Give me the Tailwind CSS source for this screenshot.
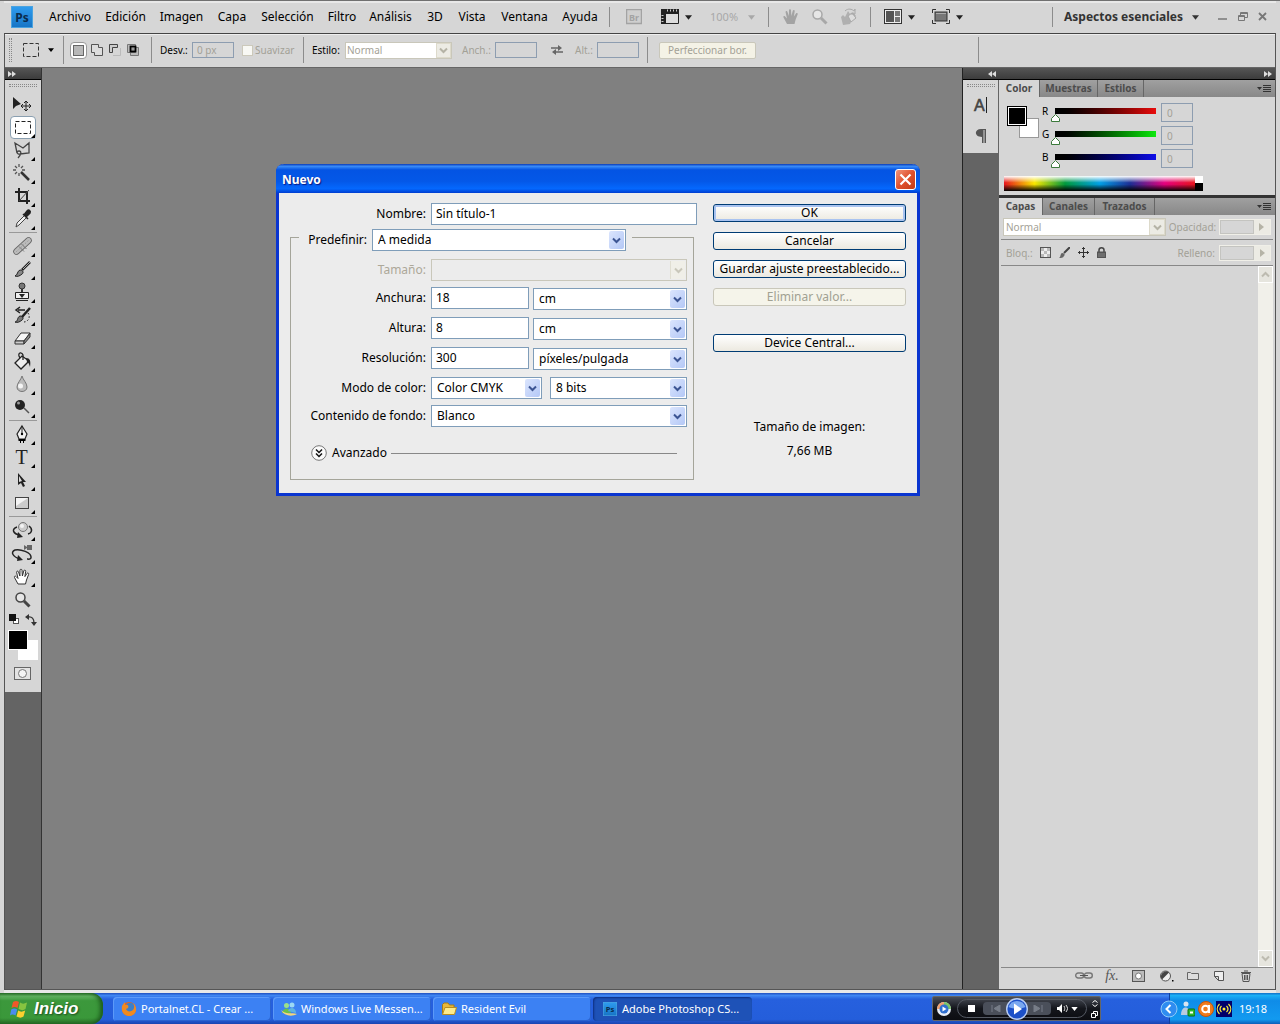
<!DOCTYPE html>
<html lang="es">
<head>
  <meta charset="UTF-8" />
  <title>Adobe Photoshop CS4</title>
  <script src="https://cdn.jsdelivr.net/npm/@tailwindcss/browser@4"></script>
</head>
<body class="h-screen overflow-hidden flex flex-col bg-[#d6d6d6] text-black text-[12px] leading-4 font-['Noto_Sans','Open_Sans',sans-serif]">

  <!-- Shared icons -->
  <svg class="absolute size-0">
    <defs>
      <linearGradient id="psg" x1="0" y1="0" x2="0" y2="1"><stop offset="0" stop-color="#2f9df0" /><stop offset="1" stop-color="#1673c4" /></linearGradient>
    </defs>
    <symbol id="chevron" viewBox="0 0 9 7"><path d="M1 1.500 4.500 5 8 1.500" fill="none" stroke="currentColor" stroke-width="2" /></symbol>
    <symbol id="caret" viewBox="0 0 8 5"><path d="M0 0h8L4 5z" fill="currentColor" /></symbol>
    <symbol id="corner" viewBox="0 0 4 4"><path d="M4 0v4H0z" /></symbol>
    <symbol id="panel-menu" viewBox="0 0 14 8"><path d="M0 2h5L2.500 5z" fill="#333" /><path d="M6 .5h8M6 2.500h8M6 4.500h8M6 6.500h8" stroke="#333" /></symbol>
    <symbol id="collapse" viewBox="0 0 8 6"><path d="M0 0l4 3-4 3zM4 0l4 3-4 3z" fill="#ddd" /></symbol>
    <symbol id="ps" viewBox="0 0 22 22">
      <rect width="22" height="22" fill="url(#psg)" /><rect x=".5" y=".5" width="21" height="21" fill="none" stroke="#4aa3e0" />
      <text x="11" y="15.500" text-anchor="middle" font-family="Noto Sans" font-weight="700" font-size="12" fill="#0a2c4d">Ps</text>
    </symbol>
    <symbol id="hand" viewBox="0 0 18 18"><path d="M5 16 1.500 9.500c-.6-1.300.9-1.900 1.600-.9L5 10.500 3.600 4.300c-.2-1.300 1.500-1.700 1.900-.4L6.900 8 7 2.200c0-1.300 1.900-1.300 2 0L9.400 8l1.400-5.200c.4-1.200 2.100-.8 1.900.5L11.900 8.600l2.100-3.200c.8-1 2.200-.1 1.600 1.100L13.500 12l-1 4z" /></symbol>
    <symbol id="lens" viewBox="0 0 18 18"><circle cx="6.500" cy="6.500" r="4.500" fill="#e6e6e6" stroke="currentColor" stroke-width="1.500" /><path d="M10 10l5.500 5.500" stroke="currentColor" stroke-width="3" /></symbol>
  </svg>

  <main class="relative flex-1 min-h-0 flex flex-col border-t border-[#707070] px-1">

    <!-- Menu bar -->
    <header class="h-8 shrink-0 flex items-center border-t-2 border-[#e8e8e8] pl-[7px] pr-2 pb-[2px] text-[12px]">
      <svg class="size-[22px] shrink-0"><use href="#ps" /></svg>
      <nav class="flex ml-[9px]">
        <button class="w-14">Archivo</button>
        <button class="w-[55px]">Edición</button>
        <button class="w-[57px]">Imagen</button>
        <button class="w-[44px]">Capa</button>
        <button class="w-[67px]">Selección</button>
        <button class="w-[42px]">Filtro</button>
        <button class="w-[55px]">Análisis</button>
        <button class="w-[34px]">3D</button>
        <button class="w-[40px]">Vista</button>
        <button class="w-[65px]">Ventana</button>
        <button class="w-[46px]">Ayuda</button>
      </nav>
      <span class="w-px h-5 bg-[#8c8c8c] ml-[6px]"></span>
      <button aria-label="Bridge" class="ml-4"><svg class="size-4" viewBox="0 0 16 16"><rect x=".5" y=".5" width="15" height="14" fill="#cfcfcf" stroke="#a3a3a3" stroke-width="1.500" /><text x="8" y="11.500" text-anchor="middle" font-family="Noto Sans" font-weight="700" font-size="9" fill="#a3a3a3">Br</text></svg></button>
      <button aria-label="Extras" class="flex items-center ml-[19px] gap-[6px] text-[#222]">
        <svg class="w-[18px] h-4" viewBox="0 0 18 16"><path d="M.5 14.500V.5h17v14z" fill="#ddd" stroke="#222" /><path d="M0 2.500h18" stroke="#222" stroke-width="5" /><path d="M2.500 0v15" stroke="#222" stroke-width="5" /><path d="M6 1.500h11" stroke="#ccc" stroke-width="2" stroke-dasharray="1 2" /><path d="M1.500 6v8" stroke="#ccc" stroke-width="2" stroke-dasharray="1 2" /></svg>
        <svg class="w-[7px] h-[5px]"><use href="#caret" /></svg>
      </button>
      <button class="flex items-center gap-[10px] ml-[18px] text-[11px] text-[#a8a8a8]">100% <svg class="w-[7px] h-[5px]"><use href="#caret" /></svg></button>
      <span class="w-px h-5 bg-[#8c8c8c] ml-[13px]"></span>
      <button aria-label="Mano" class="ml-[13px]"><svg class="size-[18px] fill-[#a3a3a3]"><use href="#hand" /></svg></button>
      <button aria-label="Zoom" class="ml-[11px]"><svg class="size-[18px] text-[#a8a8a8]"><use href="#lens" /></svg></button>
      <button aria-label="Rotar vista" class="ml-[11px]"><svg class="size-[18px]" viewBox="0 0 18 18"><path d="M3 17 1 9l2-2 2 2 3-6 2 3 3-2 3 4-4 4-2 4z" fill="#b0b0b0" /><path d="M8 8l4-3 4 5-5 4z" fill="#ddd" stroke="#a8a8a8" /><path d="M5 3c3-3 7-2 9 0l1-2v5h-4" fill="none" stroke="#a8a8a8" /></svg></button>
      <span class="w-px h-5 bg-[#8c8c8c] ml-3"></span>
      <button aria-label="Organizar documentos" class="flex items-center gap-[6px] ml-[13px] text-[#222]">
        <svg class="w-[18px] h-4" viewBox="0 0 18 16"><rect x=".5" y=".5" width="17" height="14" fill="#eee" stroke="#333" /><path d="M2 2h8v11H2z" fill="#555" /><path d="M11 2h5v5h-5zM11 8h5v5h-5z" fill="#777" /></svg>
        <svg class="w-[7px] h-[5px]"><use href="#caret" /></svg>
      </button>
      <button aria-label="Modo de pantalla" class="flex items-center gap-[6px] ml-[17px] text-[#222]">
        <svg class="w-[18px] h-4" viewBox="0 0 18 16"><path d="M.5 4V.5H4M14 .5h3.500V4M17.500 11v3.500H14M4 14.500H.5V11" fill="none" stroke="#333" /><rect x="3" y="3" width="12" height="9" fill="#777" stroke="#333" /><path d="M4 4.500h10" stroke="#aaa" /></svg>
        <svg class="w-[7px] h-[5px]"><use href="#caret" /></svg>
      </button>
      <div class="ml-auto flex items-center">
        <span class="w-px h-5 bg-[#8c8c8c]"></span>
        <button class="flex items-center gap-[9px] ml-[11px] font-bold text-[#333]">Aspectos esenciales <svg class="w-[7px] h-[5px]"><use href="#caret" /></svg></button>
        <button aria-label="Minimizar" class="ml-[19px]"><svg class="size-[10px]" viewBox="0 0 10 10"><path d="M0 7h9" stroke="#777" stroke-width="1.500" /></svg></button>
        <button aria-label="Restaurar" class="ml-[10px]"><svg class="size-[10px]" viewBox="0 0 10 10"><path d="M2.500 3V.5h7v5H7M.5 3.500h6v5h-6zM.5 4.500h6M2.500 1.500h7" fill="none" stroke="#777" /></svg></button>
        <button aria-label="Cerrar" class="ml-[10px]"><svg class="size-[10px]" viewBox="0 0 10 10"><path d="M1 1l7 7M8 1L1 8" stroke="#777" stroke-width="1.800" /></svg></button>
      </div>
    </header>

    <div class="flex-1 min-h-0 flex flex-col border border-t-[#444] border-[#555] bg-[#808080]">

      <!-- Options bar -->
      <section class="h-[34px] shrink-0 flex items-center bg-[#d6d6d6] border-b border-[#666] border-t border-t-[#eee] px-1 pb-[2px] text-[10px] text-[#a3a196]">
        <span class="w-[3px] h-6 border-x border-dotted border-[#888]"></span>
        <button aria-label="Marco rectangular" class="flex items-center gap-[9px] ml-[11px] text-black">
          <svg class="w-4 h-[15px]" viewBox="0 0 16 15"><rect x=".5" y=".5" width="15" height="13" fill="none" stroke="#333" stroke-dasharray="4 2" /></svg>
          <svg class="w-[6px] h-[4px]"><use href="#caret" /></svg>
        </button>
        <span class="w-px h-7 bg-[#8c8c8c] ml-[9px]"></span>
        <div class="flex items-center ml-[6px] gap-px">
          <button aria-label="Nueva" class="size-[17px] grid place-items-center bg-white rounded-sm border border-[#999]"><svg class="size-[11px]" viewBox="0 0 11 11"><rect x=".5" y=".5" width="10" height="10" fill="#b8b8b8" stroke="#666" /></svg></button>
          <button aria-label="Añadir" class="size-[17px] grid place-items-center"><svg class="size-[14px]" viewBox="0 0 14 14"><path d="M1.500 1.500h7v3h4v8h-8v-3h-3z" fill="#ddd" stroke="#555" /></svg></button>
          <button aria-label="Restar" class="size-[17px] grid place-items-center"><svg class="size-[14px]" viewBox="0 0 14 14"><path d="M1.500 9.500v-8h8v3h-5v5z" fill="#ccc" stroke="#444" /><path d="M5 12.500h7.500V5" fill="none" stroke="#bbb" /></svg></button>
          <button aria-label="Intersecar" class="size-[17px] grid place-items-center"><svg class="size-[14px]" viewBox="0 0 14 14"><path d="M1.500 1.500h8v8h-8zM4.500 4.500h8v8h-8z" fill="#bbb" stroke="#777" /><rect x="4.500" y="3.500" width="5" height="5" fill="#999" stroke="#000" stroke-width="1.800" /></svg></button>
        </div>
        <span class="w-px h-[26px] bg-[#8c8c8c] ml-[10px]"></span>
        <label for="desv" class="w-10 pl-2 text-black whitespace-nowrap">Desv.:</label>
        <input id="desv" value="0 px" disabled class="w-[42px] h-4 px-1 border border-[#8d9db0]" />
        <label class="flex items-center gap-[2px] ml-2 w-[61px]"><input type="checkbox" disabled class="appearance-none size-[11px] bg-[#f8f8f4] border border-[#ccc9bb]" />Suavizar</label>
        <span class="w-px h-[26px] bg-[#8c8c8c]"></span>
        <label for="estilo" class="w-10 pl-2 text-black">Estilo:</label>
        <span class="relative w-[107px] h-[17px] ml-px">
          <select id="estilo" disabled class="appearance-none block size-full bg-white border border-[#c9c7ba] pl-px leading-3 opacity-100"><option>Normal</option></select>
          <span class="absolute right-px top-px w-[15px] h-[15px] grid place-items-center bg-[#ecebe4] border border-[#dddacb] pointer-events-none text-[#b5b3a6]"><svg class="w-[9px] h-[7px]"><use href="#chevron" /></svg></span>
        </span>
        <label for="anch" class="w-[43px] pl-[10px] whitespace-nowrap">Anch.:</label>
        <input id="anch" disabled class="w-[42px] h-4 border border-[#8d9db0]" />
        <svg class="w-3 h-[10px] ml-[14px]" viewBox="0 0 12 10"><path d="M0 3h8M4 7h8" stroke="#666" stroke-width="1.500" /><path d="M7 0l4 3-4 3zM5 4L1 7l4 3z" fill="#666" /></svg>
        <label for="alt" class="w-[34px] pl-3 whitespace-nowrap">Alt.:</label>
        <input id="alt" disabled class="w-[42px] h-4 border border-[#8d9db0]" />
        <span class="w-px h-[26px] bg-[#8c8c8c] ml-2"></span>
        <button disabled class="w-[97px] h-[17px] ml-[11px] rounded-xs bg-[#f4f2e6] border border-[#c9c7ba] leading-3 whitespace-nowrap">Perfeccionar bor.</button>
        <span class="w-px h-[26px] bg-[#8c8c8c] ml-[222px]"></span>
      </section>

      <div class="flex-1 min-h-0 flex">

        <!-- Tools -->
        <aside class="w-[37px] shrink-0 flex flex-col bg-[#646464] border-r border-[#333]">
          <div class="h-3 shrink-0 bg-linear-to-b from-[#555] to-[#3c3c3c] border-b border-black flex items-center pl-[3px]"><svg class="w-2 h-[6px]"><use href="#collapse" /></svg></div>
          <div class="bg-[#d6d6d6] h-[612px] flex flex-col items-center pr-px">
            <span class="w-7 h-[3px] mt-1 mb-[6px] border-y border-dotted border-[#888]"></span>
            <button aria-label="Mover" class="h-[23px]"><svg class="w-6 h-[23px]" viewBox="0 0 24 23"><path d="M2 4v12l3-3 5-2z" fill="#222" /><path d="M15 8v10M10 13h10M13 10l2-2 2 2M13 16l2 2 2-2M12 11l-2 2 2 2M18 11l2 2-2 2" fill="none" stroke="#222" /></svg></button>
            <button aria-label="Marco" class="h-[23px] w-[26px] rounded border border-[#8a9fb0] bg-white relative"><svg class="w-6 h-[21px]" viewBox="0 0 24 21"><rect x="4.500" y="4.500" width="15" height="12" fill="none" stroke="#222" stroke-dasharray="4 2" /></svg><svg class="absolute right-0 bottom-0 size-1"><use href="#corner" /></svg></button>
            <button aria-label="Lazo" class="h-[23px] relative"><svg class="w-6 h-[23px]" viewBox="0 0 24 23"><path d="M6 14 4 4l8 5 6-5v10l-9 1c-3 1-4-3-1-3s2 4-1 7" fill="none" stroke="#444" stroke-width="1.300" /></svg><svg class="absolute right-0 bottom-px size-1"><use href="#corner" /></svg></button>
            <button aria-label="Varita" class="h-[23px] relative"><svg class="w-6 h-[23px]" viewBox="0 0 24 23"><path d="M10 10l8 8" stroke="#333" stroke-width="2.500" /><path d="M8 2v3M8 11v3M2 8h3M11 8h3M4 4l2 2M12 4l-2 2M4 12l2-2" stroke="#555" stroke-width="1.300" /></svg><svg class="absolute right-0 bottom-px size-1"><use href="#corner" /></svg></button>
            <button aria-label="Recortar" class="h-[23px] relative"><svg class="w-6 h-[23px]" viewBox="0 0 24 23"><path d="M8 3v13h11M4 7h12v12" fill="none" stroke="#222" stroke-width="2" /><path d="M8 16 18 5" stroke="#444" /></svg><svg class="absolute right-0 bottom-px size-1"><use href="#corner" /></svg></button>
            <button aria-label="Cuentagotas" class="h-[23px] relative"><svg class="w-6 h-[23px]" viewBox="0 0 24 23"><path d="M5 19l1-4 8-8 2 2-8 8z" fill="#eee" stroke="#444" /><path d="M12 6l5 5M13 7l3-4c2-2 4 0 3 2l-4 4z" fill="#222" stroke="#222" stroke-width="1.500" /></svg><svg class="absolute right-0 bottom-px size-1"><use href="#corner" /></svg></button>
            <span class="w-7 h-px my-[1px] mb-[2px] bg-[#999]"></span>
            <button aria-label="Pincel corrector" class="h-[23px] relative"><svg class="w-6 h-[23px]" viewBox="0 0 24 23"><path d="M5.500 16.500l12-11" stroke="#666" stroke-width="6.500" stroke-linecap="round" /><path d="M5.500 16.500l12-11" stroke="#bbb" stroke-width="5" stroke-linecap="round" /><path d="M8 11.500l5 5M10.500 9l5 5" stroke="#777" /><path d="M5.500 16.500l12-11" stroke="#888" stroke-dasharray="1 2" /></svg><svg class="absolute right-0 bottom-px size-1"><use href="#corner" /></svg></button>
            <button aria-label="Pincel" class="h-[23px] relative"><svg class="w-6 h-[23px]" viewBox="0 0 24 23"><path d="M19 4l-8 8" stroke="#222" stroke-width="2.500" /><path d="M19 4l-7 7" stroke="#aaa" /><path d="M4 18c3-1 2-5 5-6 3 0 4 3 2 4-2 2-5 3-7 2z" fill="#888" stroke="#222" /></svg><svg class="absolute right-0 bottom-px size-1"><use href="#corner" /></svg></button>
            <button aria-label="Tampón" class="h-[23px] relative"><svg class="w-6 h-[23px]" viewBox="0 0 24 23"><circle cx="11" cy="5" r="3" fill="#777" stroke="#333" /><path d="M10 8h2v4h-2z" fill="#333" /><path d="M4.500 11.500h13v6h-13zM5 19.500h12" fill="#eee" stroke="#222" /><path d="M8 13h6l-3 4z" fill="#222" /></svg><svg class="absolute right-0 bottom-px size-1"><use href="#corner" /></svg></button>
            <button aria-label="Pincel de historia" class="h-[23px] relative"><svg class="w-6 h-[23px]" viewBox="0 0 24 23"><path d="M19 4l-8 9" stroke="#222" stroke-width="2.500" /><path d="M4 18c3 0 2-5 5-6 3 0 4 3 2 4-2 2-5 3-7 2z" fill="#777" stroke="#222" /><path d="M7 6h7M9 3L5 6l4 3" fill="none" stroke="#222" stroke-width="1.500" /><path d="M17 9c3 4 0 9-4 9" fill="none" stroke="#222" stroke-dasharray="1.500 2" /></svg><svg class="absolute right-0 bottom-px size-1"><use href="#corner" /></svg></button>
            <button aria-label="Borrador" class="h-[23px] relative"><svg class="w-6 h-[23px]" viewBox="0 0 24 23"><path d="M4 14l6-8h9l-6 8z" fill="#f6f6f6" stroke="#333" /><path d="M4 14v3h9v-3z" fill="#ccc" stroke="#333" /><path d="M13 14v3l6-7V6z" fill="#888" stroke="#333" /></svg><svg class="absolute right-0 bottom-px size-1"><use href="#corner" /></svg></button>
            <button aria-label="Bote de pintura" class="h-[23px] relative"><svg class="w-6 h-[23px]" viewBox="0 0 24 23"><path d="M4 13l7-7 7 5-8 8z" fill="#eee" stroke="#222" stroke-width="1.300" /><path d="M15 8c4 0 5 3 4 9-1-3-1-4-3-5z" fill="#222" /><path d="M12 10V5c-1-3-5-3-4 1l1 2" fill="none" stroke="#222" stroke-width="1.300" /></svg><svg class="absolute right-0 bottom-px size-1"><use href="#corner" /></svg></button>
            <button aria-label="Desenfocar" class="h-[23px] relative"><svg class="w-6 h-[23px]" viewBox="0 0 24 23"><path d="M11 3c1 4 5 7 5 11 0 6-10 6-10 0 0-4 4-7 5-11z" fill="#bbb" stroke="#777" /><circle cx="9.500" cy="13" r="2.500" fill="#f4f4f4" /></svg><svg class="absolute right-0 bottom-px size-1"><use href="#corner" /></svg></button>
            <button aria-label="Subexponer" class="h-[23px] relative"><svg class="w-6 h-[23px]" viewBox="0 0 24 23"><circle cx="9" cy="9" r="5" fill="#222" /><circle cx="7.500" cy="7" r="1.500" fill="#999" /><path d="M13 12l5 5" stroke="#555" stroke-width="1.500" /></svg><svg class="absolute right-0 bottom-px size-1"><use href="#corner" /></svg></button>
            <span class="w-7 h-px my-[1px] mb-[2px] bg-[#999]"></span>
            <button aria-label="Pluma" class="h-[23px] relative"><svg class="w-6 h-[23px]" viewBox="0 0 24 23"><path d="M11 3l5 8-2 5H8l-2-5z" fill="#f2f2f2" stroke="#222" stroke-width="1.200" /><path d="M11 3v8" stroke="#222" /><circle cx="11" cy="11" r="1.200" /><path d="M7.500 16h7v2h-7zM9 18h1v2H9zM12 18h1v2h-1z" /></svg><svg class="absolute right-0 bottom-px size-1"><use href="#corner" /></svg></button>
            <button aria-label="Texto" class="h-[23px] w-6 relative pr-[2px] text-[20px] leading-[23px] text-[#222] font-['Liberation_Serif',serif]">T<svg class="absolute right-0 bottom-px size-1"><use href="#corner" /></svg></button>
            <button aria-label="Selección de trazado" class="h-[23px] relative"><svg class="w-6 h-[23px]" viewBox="0 0 24 23"><path d="M7 4v12l3-2 2 4 2-1-2-4h3z" fill="#222" /><path d="M8 7v6l3-1z" fill="#ddd" /></svg><svg class="absolute right-0 bottom-px size-1"><use href="#corner" /></svg></button>
            <button aria-label="Rectángulo" class="h-[23px] relative"><svg class="w-6 h-[23px]" viewBox="0 0 24 23"><rect x="4.500" y="5.500" width="13" height="11" fill="#ccc" stroke="#444" /><path d="M5 6h12L5 14z" fill="#f4f4f4" /></svg><svg class="absolute right-0 bottom-px size-1"><use href="#corner" /></svg></button>
            <span class="w-7 h-px my-[1px] mb-[2px] bg-[#999]"></span>
            <button aria-label="Rotación 3D" class="h-[23px] relative"><svg class="w-6 h-[23px]" viewBox="0 0 24 23"><path d="M6 8c-6 2-4 7 3 8M18 7c4 3 3 7-1 8" fill="none" stroke="#222" stroke-width="1.500" /><path d="M7 13l5 5-6 1z" fill="#222" /><circle cx="12" cy="8" r="4.500" fill="#ccc" stroke="#777" /><circle cx="11" cy="7" r="2" fill="#f4f4f4" /></svg><svg class="absolute right-0 bottom-px size-1"><use href="#corner" /></svg></button>
            <button aria-label="Órbita 3D" class="h-[23px] relative"><svg class="w-6 h-[23px]" viewBox="0 0 24 23"><path d="M9 17C2 15-1 10 4 8c5-1 17 2 16 8-1 2-3 1-4 1" fill="none" stroke="#222" stroke-width="1.500" /><path d="M7 13l5 5-6 1z" fill="#222" /><path d="M13 3l3 2V3h5v5h-5V6l-3 2z" fill="#666" /></svg><svg class="absolute right-0 bottom-px size-1"><use href="#corner" /></svg></button>
            <button aria-label="Mano" class="h-[23px] w-6 relative"><svg class="size-[18px] ml-[2px] fill-white stroke-[#333]"><use href="#hand" /></svg><svg class="absolute right-0 bottom-px size-1"><use href="#corner" /></svg></button>
            <button aria-label="Zoom" class="h-[23px] w-6"><svg class="size-[18px] ml-[3px] text-[#444]"><use href="#lens" /></svg></button>
            <div class="flex w-full justify-between pl-1 pr-[3px] pt-[3px]">
              <svg class="size-3" viewBox="0 0 12 12"><rect x="4.500" y="4.500" width="5" height="5" fill="#fff" stroke="#555" /><rect width="7" height="7" fill="#111" /></svg>
              <svg class="size-3" viewBox="0 0 12 12"><path d="M3 3c4-1 6 2 6 6" fill="none" stroke="#333" stroke-width="1.300" /><path d="M0 3l4-3v6zM6 8h6l-3 4z" fill="#333" /></svg>
            </div>
            <div class="relative size-[30px] mt-1 shrink-0">
              <button aria-label="Color de fondo" class="absolute right-0 bottom-0 size-5 bg-white"></button>
              <button aria-label="Color frontal" class="absolute left-0 top-0 size-5 bg-black border border-white"></button>
            </div>
            <button aria-label="Máscara rápida" class="mt-[7px]"><svg class="w-[17px] h-[13px]" viewBox="0 0 17 13"><rect x=".5" y=".5" width="16" height="12" fill="#e4e4e4" stroke="#666" /><circle cx="8.500" cy="6.500" r="4" fill="#f4f4f4" stroke="#777" /></svg></button>
          </div>
        </aside>

        <!-- Canvas -->
        <div class="flex-1"></div>

        <!-- Panels -->
        <aside class="w-[313px] shrink-0 flex flex-col bg-[#646464] border-l border-[#222]">
          <div class="h-3 shrink-0 bg-linear-to-b from-[#555] to-[#3c3c3c] border-b border-black flex items-center pr-[3px]">
            <svg class="w-2 h-[6px] ml-[25px] rotate-180"><use href="#collapse" /></svg>
            <svg class="w-2 h-[6px] ml-auto"><use href="#collapse" /></svg>
          </div>
          <div class="flex-1 min-h-0 flex gap-px">
            <div class="w-[35px] h-[73px] flex flex-col items-center bg-[#d6d6d6]">
              <span class="w-7 h-[3px] mt-1 border-y border-dotted border-[#888]"></span>
              <button aria-label="Carácter" class="mt-[10px]"><svg class="size-4" viewBox="0 0 16 16"><text x="1" y="14" font-family="Liberation Sans" font-size="16" fill="#444" stroke="#444" stroke-width=".6">A</text><path d="M13.500 0v16" stroke="#222" /></svg></button>
              <button aria-label="Párrafo" class="mt-4"><svg class="w-3 h-[14px]" viewBox="0 0 12 14"><path d="M11 0v14H9.500V1H8.500v13H7V8C-1 8-1 0 6 0z" fill="#555" /></svg></button>
            </div>

            <div class="flex-1 min-w-0 flex flex-col gap-[3px] bg-[#333] text-[10px] text-[#a3a196]">

              <!-- Color -->
              <section class="bg-[#d6d6d6] h-[115px] shrink-0">
                <div class="h-[17px] flex bg-linear-to-b from-[#a0a0a0] to-[#888] font-bold text-[#4c4c4c]">
                  <button class="w-10 pb-px bg-[#d6d6d6]">Color</button>
                  <button class="w-[59px] pb-px border-x border-[#666]">Muestras</button>
                  <button class="w-[46px] pb-px border-r border-[#666]">Estilos</button>
                  <button aria-label="Menú del panel" class="ml-auto pr-1"><svg class="w-[14px] h-2"><use href="#panel-menu" /></svg></button>
                </div>
                <div class="flex pl-2 pt-[6px]">
                  <div class="relative size-8 mt-[3px]">
                    <button aria-label="Fondo" class="absolute right-0 bottom-0 size-5 bg-white border border-[#999]"></button>
                    <button aria-label="Frente" class="absolute left-0 top-0 size-5 bg-black border border-black outline-1 -outline-offset-2 outline-white"></button>
                  </div>
                  <div class="flex flex-col gap-1 pl-[3px]">
                    <div class="flex h-[19px]">
                      <label for="r" class="w-[13px] text-black">R</label>
                      <span class="relative w-[101px] h-[19px]">
                        <input id="r" type="range" value="0" max="255" class="appearance-none block w-full h-[6px] mt-[5px] bg-linear-to-r from-black to-[#e80c0c] [&::-webkit-slider-thumb]:appearance-none" />
                        <svg class="absolute -left-1 top-[11px] w-[9px] h-2" viewBox="0 0 9 8"><path d="M4.500.5l4 4v3h-8v-3z" fill="#fff" stroke="#3c7a3c" /></svg>
                      </span>
                      <input aria-label="Valor R" value="0" disabled class="w-8 h-[19px] ml-[5px] pl-[5px] border border-[#8d9db0]" />
                    </div>
                    <div class="flex h-[19px]">
                      <label for="g" class="w-[13px] text-black">G</label>
                      <span class="relative w-[101px] h-[19px]">
                        <input id="g" type="range" value="0" max="255" class="appearance-none block w-full h-[6px] mt-[5px] bg-linear-to-r from-black to-[#0ce80c] [&::-webkit-slider-thumb]:appearance-none" />
                        <svg class="absolute -left-1 top-[11px] w-[9px] h-2" viewBox="0 0 9 8"><path d="M4.500.5l4 4v3h-8v-3z" fill="#fff" stroke="#3c7a3c" /></svg>
                      </span>
                      <input aria-label="Valor G" value="0" disabled class="w-8 h-[19px] ml-[5px] pl-[5px] border border-[#8d9db0]" />
                    </div>
                    <div class="flex h-[19px]">
                      <label for="b" class="w-[13px] text-black">B</label>
                      <span class="relative w-[101px] h-[19px]">
                        <input id="b" type="range" value="0" max="255" class="appearance-none block w-full h-[6px] mt-[5px] bg-linear-to-r from-black to-[#0c0ce8] [&::-webkit-slider-thumb]:appearance-none" />
                        <svg class="absolute -left-1 top-[11px] w-[9px] h-2" viewBox="0 0 9 8"><path d="M4.500.5l4 4v3h-8v-3z" fill="#fff" stroke="#3c7a3c" /></svg>
                      </span>
                      <input aria-label="Valor B" value="0" disabled class="w-8 h-[19px] ml-[5px] pl-[5px] border border-[#8d9db0]" />
                    </div>
                  </div>
                </div>
                <div class="flex w-[199px] h-[15px] ml-[5px] mt-[8px]">
                  <div class="flex-1 bg-[linear-gradient(to_bottom,#fff,#fff0_45%,#0000_55%,#000),linear-gradient(to_right,#e8131c,#f9e800_16%,#009a3c_32%,#00a0e6_50%,#1d2f96_66%,#e5007e_84%,#e8131c)]"></div>
                  <div class="w-2 bg-linear-to-b from-white from-50% to-black to-50%"></div>
                </div>
              </section>

              <!-- Layers -->
              <section class="flex-1 min-h-0 flex flex-col bg-[#d6d6d6]">
                <div class="h-[17px] shrink-0 flex bg-linear-to-b from-[#a0a0a0] to-[#888] font-bold text-[#4c4c4c]">
                  <button class="w-[43px] pb-px bg-[#d6d6d6]">Capas</button>
                  <button class="w-[53px] pb-px border-x border-[#666]">Canales</button>
                  <button class="w-[60px] pb-px border-r border-[#666]">Trazados</button>
                  <button aria-label="Menú del panel" class="ml-auto pr-1"><svg class="w-[14px] h-2"><use href="#panel-menu" /></svg></button>
                </div>
                <div class="h-[25px] shrink-0 mx-[2px] flex items-center justify-between pl-[2px] pr-[2px] border-b border-[#888]">
                  <span class="relative w-[163px] h-[18px]">
                    <select aria-label="Modo de fusión" disabled class="appearance-none block size-full bg-white border border-[#c9c7ba] pl-[2px] leading-3 opacity-100"><option>Normal</option></select>
                    <span class="absolute right-px top-px w-4 h-4 grid place-items-center bg-[#ecebe4] border border-[#dddacb] pointer-events-none text-[#b5b3a6]"><svg class="w-[9px] h-[7px]"><use href="#chevron" /></svg></span>
                  </span>
                  <label for="opacidad">Opacidad:</label>
                  <span class="flex w-[52px] h-4 border border-[#f0efe8]">
                    <input id="opacidad" disabled class="w-[34px] border border-[#c4c4c0]" />
                    <button aria-label="Ajustar opacidad" disabled class="flex-1 grid place-items-center bg-[#ecebe4] text-[#b5b3a6]"><svg class="w-[5px] h-2" viewBox="0 0 5 8"><path d="M0 0l5 4-5 4z" fill="currentColor" /></svg></button>
                  </span>
                </div>
                <div class="h-[26px] shrink-0 mx-[2px] flex items-center gap-2 pl-[5px] pr-[2px] border-b border-[#888]">
                  <span class="w-[26px] whitespace-nowrap">Bloq.:</span>
                  <button aria-label="Bloquear transparencia"><svg class="size-[11px]" viewBox="0 0 11 11"><rect x=".5" y=".5" width="10" height="10" fill="#eee" stroke="#555" /><path d="M1 1h3v3H1zM7 1h3v3H7zM4 4h3v3H4zM1 7h3v3H1zM7 7h3v3H7z" fill="#bbb" /></svg></button>
                  <button aria-label="Bloquear píxeles"><svg class="size-[11px]" viewBox="0 0 11 11"><path d="M11 0L5 6" stroke="#444" stroke-width="2" /><path d="M0 11c2-1 1-4 3-5 3 0 3 2 2 3-1 2-3 2-5 2z" fill="#666" /></svg></button>
                  <button aria-label="Bloquear posición"><svg class="size-[11px]" viewBox="0 0 11 11"><path d="M5.500 0v11M0 5.500h11M4 2l1.500-1.500L7 2M4 9l1.500 1.500L7 9M2 4L.5 5.500 2 7M9 4l1.500 1.500L9 7" fill="none" stroke="#333" /></svg></button>
                  <button aria-label="Bloquear todo"><svg class="w-[9px] h-[11px]" viewBox="0 0 9 11"><path d="M2 5V3c0-3 5-3 5 0v2" fill="none" stroke="#444" stroke-width="1.500" /><rect y="4.500" width="9" height="6.500" fill="#555" /><path d="M1 7h7M1 9h7" stroke="#888" /></svg></button>
                  <label for="relleno" class="ml-auto -mr-1">Relleno:</label>
                  <span class="flex w-[52px] h-4 border border-[#f0efe8]">
                    <input id="relleno" disabled class="w-[34px] border border-[#c4c4c0]" />
                    <button aria-label="Ajustar relleno" disabled class="flex-1 grid place-items-center bg-[#ecebe4] text-[#b5b3a6]"><svg class="w-[5px] h-2" viewBox="0 0 5 8"><path d="M0 0l5 4-5 4z" fill="currentColor" /></svg></button>
                  </span>
                </div>
                <div class="flex-1 flex justify-end pr-[2px]">
                  <div class="w-[15px] flex flex-col justify-between bg-[#f1f0ea] text-[#bdbbb0]">
                    <button aria-label="Subir" class="h-[17px] grid place-items-center bg-[#e6e5de] border border-white"><svg class="w-[9px] h-[7px] rotate-180"><use href="#chevron" /></svg></button>
                    <button aria-label="Bajar" class="h-[17px] grid place-items-center bg-[#e6e5de] border border-white"><svg class="w-[9px] h-[7px]"><use href="#chevron" /></svg></button>
                  </div>
                </div>
                <footer class="h-[22px] shrink-0 mx-[2px] border-t border-[#888] flex items-center justify-end gap-[15px] pr-[22px] pb-[6px] text-[#555]">
                  <button aria-label="Enlazar"><svg class="w-[18px] h-[7px]" viewBox="0 0 18 7"><rect x=".7" y="1" width="8" height="5" rx="2.500" fill="none" stroke="#777" stroke-width="1.400" /><rect x="9.300" y="1" width="8" height="5" rx="2.500" fill="none" stroke="#777" stroke-width="1.400" /><path d="M5 3.500h8" stroke="#555" /></svg></button>
                  <button aria-label="Estilo de capa" class="-ml-1 -mr-[3px] w-4 text-[14px] italic font-['Liberation_Serif',serif]">fx.</button>
                  <button aria-label="Máscara"><svg class="w-[13px] h-3" viewBox="0 0 13 12"><rect x=".5" y=".5" width="12" height="11" fill="#bbb" stroke="#555" /><circle cx="6.500" cy="6" r="3" fill="#fff" stroke="#777" /></svg></button>
                  <button aria-label="Ajuste"><svg class="w-[14px] h-3" viewBox="0 0 14 12"><circle cx="5.500" cy="6" r="5" fill="#eee" stroke="#555" /><path d="M2 9.500A5 5 0 0 1 9 2.500z" fill="#444" /><path d="M12 10h1.500v1.500H12z" /></svg></button>
                  <button aria-label="Grupo" class="-ml-[2px]"><svg class="w-3 h-[9px]" viewBox="0 0 12 9"><path d="M.5 8.500v-7h3l1 1h7v6z" fill="#ddd" stroke="#666" /></svg></button>
                  <button aria-label="Nueva capa"><svg class="w-[10px] h-[10px]" viewBox="0 0 10 10"><path d="M.5.5h9v9h-5v-4h-4z" fill="#eee" stroke="#555" /><path d="M.5 5.500l4 4" stroke="#555" /></svg></button>
                  <button aria-label="Eliminar" class="ml-[2px]"><svg class="w-[10px] h-3" viewBox="0 0 10 12"><path d="M1 3.500h8l-1 8H2zM0 2.500h10M3 1h4M3.500 5v5M5 5v5M6.500 5v5" fill="none" stroke="#555" /></svg></button>
                </footer>
              </section>
            </div>
          </div>
        </aside>
      </div>
    </div>
    <div class="h-[3px] shrink-0 bg-[#e8e8e8]"></div>

    <!-- New document dialog -->
    <form class="absolute left-[276px] top-[163px] w-[644px] rounded-t-lg border-3 border-t-0 border-[#0a35d0] bg-[#ececec]">
      <div class="h-[29px] -mx-[3px] pl-[6px] pr-1 flex items-center justify-between rounded-t-lg bg-[linear-gradient(to_bottom,#0a3bb5,#3a8cf8_8%,#0454e3_20%,#0458e8_60%,#0468fe_85%,#003dd0)]">
        <h1 class="pt-[2px] font-bold text-[12px] text-white [text-shadow:1px_1px_1px_#0a1883]">Nuevo</h1>
        <button type="button" aria-label="Cerrar" class="size-[21px] mt-[2px] grid place-items-center rounded-[3px] border border-white bg-linear-to-br from-[#f0937a] via-[#e0502c] to-[#c33c14]"><svg class="size-[13px]" viewBox="0 0 13 13"><path d="M1.500 1.500l10 10M11.500 1.500l-10 10" stroke="#fff" stroke-width="2.200" /></svg></button>
      </div>
      <div class="flex gap-4 pt-[10px] pl-[11px] pr-[11px] pb-[13px]">
        <div class="w-[407px]">
          <div class="flex items-center">
            <label for="nombre" class="w-[141px] pr-[5px] text-right">Nombre:</label>
            <input id="nombre" value="Sin título-1" class="flex-1 h-[22px] px-1 pb-[2px] bg-white border border-[#7f9db9]" />
          </div>
          <fieldset class="w-[404px] -mt-[2px] border border-[#a5a59a] pl-2 pb-[18px]">
            <legend class="flex items-center pt-[6px] pr-[6px]">
              <label for="predefinir" class="w-[73px] pr-[5px] text-right">Predefinir:</label>
              <span class="relative w-[254px] h-[22px]">
                <select id="predefinir" class="appearance-none block size-full bg-white border border-[#7f9db9] pl-[5px]"><option>A medida</option></select>
                <span class="absolute right-[2px] top-[2px] w-[15px] h-[18px] grid place-items-center rounded-xs bg-linear-to-br from-[#dbe5fd] to-[#b4c8f6] pointer-events-none text-[#3c5593]"><svg class="w-[9px] h-[7px]"><use href="#chevron" /></svg></span>
              </span>
            </legend>
            <div class="flex items-center mt-2 text-[#aca899]">
              <label for="tamano" class="w-[132px] pr-[5px] text-right">Tamaño:</label>
              <span class="relative w-[256px] h-[22px]">
                <select id="tamano" disabled class="appearance-none block size-full border border-[#c9c7ba]"><option></option></select>
                <span class="absolute right-[2px] top-[2px] w-[15px] h-[18px] grid place-items-center bg-[#f0efe8] border-l border-[#e0ded2] pointer-events-none text-[#c9c7ba]"><svg class="w-[9px] h-[7px]"><use href="#chevron" /></svg></span>
              </span>
            </div>
            <div class="flex items-center mt-[6px]">
              <label for="anchura" class="w-[132px] pr-[5px] text-right">Anchura:</label>
              <input id="anchura" value="18" class="w-[98px] h-[22px] px-1 pb-[2px] bg-white border border-[#7f9db9]" />
              <span class="relative w-[154px] h-[22px] ml-1 top-px">
                <select aria-label="Unidad de anchura" class="appearance-none block size-full bg-white border border-[#7f9db9] pl-[5px]"><option>cm</option></select>
                <span class="absolute right-[2px] top-[2px] w-[15px] h-[18px] grid place-items-center rounded-xs bg-linear-to-br from-[#dbe5fd] to-[#b4c8f6] pointer-events-none text-[#3c5593]"><svg class="w-[9px] h-[7px]"><use href="#chevron" /></svg></span>
              </span>
            </div>
            <div class="flex items-center mt-2">
              <label for="altura" class="w-[132px] pr-[5px] text-right">Altura:</label>
              <input id="altura" value="8" class="w-[98px] h-[22px] px-1 pb-[2px] bg-white border border-[#7f9db9]" />
              <span class="relative w-[154px] h-[22px] ml-1 top-px">
                <select aria-label="Unidad de altura" class="appearance-none block size-full bg-white border border-[#7f9db9] pl-[5px]"><option>cm</option></select>
                <span class="absolute right-[2px] top-[2px] w-[15px] h-[18px] grid place-items-center rounded-xs bg-linear-to-br from-[#dbe5fd] to-[#b4c8f6] pointer-events-none text-[#3c5593]"><svg class="w-[9px] h-[7px]"><use href="#chevron" /></svg></span>
              </span>
            </div>
            <div class="flex items-center mt-2">
              <label for="resolucion" class="w-[132px] pr-[5px] text-right">Resolución:</label>
              <input id="resolucion" value="300" class="w-[98px] h-[22px] px-1 pb-[2px] bg-white border border-[#7f9db9]" />
              <span class="relative w-[154px] h-[22px] ml-1 top-px">
                <select aria-label="Unidad de resolución" class="appearance-none block size-full bg-white border border-[#7f9db9] pl-[5px]"><option>píxeles/pulgada</option></select>
                <span class="absolute right-[2px] top-[2px] w-[15px] h-[18px] grid place-items-center rounded-xs bg-linear-to-br from-[#dbe5fd] to-[#b4c8f6] pointer-events-none text-[#3c5593]"><svg class="w-[9px] h-[7px]"><use href="#chevron" /></svg></span>
              </span>
            </div>
            <div class="flex items-center mt-2">
              <label for="modo" class="w-[132px] pr-[5px] text-right">Modo de color:</label>
              <span class="relative w-[111px] h-[22px]">
                <select id="modo" class="appearance-none block size-full bg-white border border-[#7f9db9] pl-[5px]"><option>Color CMYK</option></select>
                <span class="absolute right-[2px] top-[2px] w-[15px] h-[18px] grid place-items-center rounded-xs bg-linear-to-br from-[#dbe5fd] to-[#b4c8f6] pointer-events-none text-[#3c5593]"><svg class="w-[9px] h-[7px]"><use href="#chevron" /></svg></span>
              </span>
              <span class="relative w-[137px] h-[22px] ml-2">
                <select aria-label="Profundidad" class="appearance-none block size-full bg-white border border-[#7f9db9] pl-[5px]"><option>8 bits</option></select>
                <span class="absolute right-[2px] top-[2px] w-[15px] h-[18px] grid place-items-center rounded-xs bg-linear-to-br from-[#dbe5fd] to-[#b4c8f6] pointer-events-none text-[#3c5593]"><svg class="w-[9px] h-[7px]"><use href="#chevron" /></svg></span>
              </span>
            </div>
            <div class="flex items-center mt-[6px]">
              <label for="fondo" class="w-[132px] pr-[5px] text-right whitespace-nowrap">Contenido de fondo:</label>
              <span class="relative w-[256px] h-[22px]">
                <select id="fondo" class="appearance-none block size-full bg-white border border-[#7f9db9] pl-[5px]"><option>Blanco</option></select>
                <span class="absolute right-[2px] top-[2px] w-[15px] h-[18px] grid place-items-center rounded-xs bg-linear-to-br from-[#dbe5fd] to-[#b4c8f6] pointer-events-none text-[#3c5593]"><svg class="w-[9px] h-[7px]"><use href="#chevron" /></svg></span>
              </span>
            </div>
            <div class="flex items-center mt-[18px] pl-3 pr-4">
              <button type="button" class="flex items-center gap-[5px]">
                <svg class="size-4" viewBox="0 0 16 16"><circle cx="8" cy="8" r="7.300" fill="#fafafa" stroke="#777" /><path d="M5 4.500l3 3 3-3M5 8.500l3 3 3-3" fill="none" stroke="#111" stroke-width="1.500" /></svg>
                Avanzado
              </button>
              <span class="flex-1 h-px ml-1 bg-[#888]"></span>
            </div>
          </fieldset>
        </div>
        <div class="flex-1 flex flex-col pt-px">
          <button class="h-[18px] leading-4 rounded-[3px] border border-[#003c74] bg-linear-to-b from-white to-[#ece9e0] shadow-[inset_0_0_0_2px_#a9c3f0]">OK</button>
          <button type="button" class="h-[18px] leading-4 mt-[10px] rounded-[3px] border border-[#003c74] bg-linear-to-b from-white to-[#ece9e0]">Cancelar</button>
          <button type="button" class="h-[18px] leading-4 mt-[10px] rounded-[3px] border border-[#003c74] bg-linear-to-b from-white to-[#ece9e0] whitespace-nowrap">Guardar ajuste preestablecido...</button>
          <button type="button" disabled class="h-[18px] leading-4 mt-[10px] rounded-[3px] border border-[#c9c7ba] bg-[#f5f4ea] text-[#a1a192]">Eliminar valor...</button>
          <button type="button" class="h-[18px] leading-4 mt-7 rounded-[3px] border border-[#003c74] bg-linear-to-b from-white to-[#ece9e0]">Device Central...</button>
          <p class="mt-[67px] text-center">Tamaño de imagen:</p>
          <p class="mt-2 text-center">7,66 MB</p>
        </div>
      </div>
    </form>
  </main>

  <!-- Taskbar -->
  <footer class="h-[31px] shrink-0 flex items-center text-[11px] text-white bg-[linear-gradient(to_bottom,#1f4fc0,#3f86f2_8%,#2660de_20%,#245edb_85%,#1a44b0)]">
    <button class="w-[103px] h-full flex items-center gap-[5px] pl-[10px] rounded-r-xl bg-[linear-gradient(to_bottom,#2f7a2f,#62b462_10%,#3c983c_25%,#3a983a_80%,#2a702a)] shadow-[inset_-3px_0_4px_#1d5c1d]">
      <svg class="w-[19px] h-[18px]" viewBox="0 0 19 18"><path d="M3 2c2-1.500 4-1.500 6 0L7.500 8c-2-1.500-4-1.500-6 0z" fill="#f0572a" /><path d="M10 2.500c2 1.500 4 1.500 7 0L15.500 9c-2 1.500-4 1.500-7 0z" fill="#86c440" /><path d="M1.200 9.500c2-1.500 4-1.500 6 0L5.500 15.500c-2-1.500-4-1.500-5.500 0z" fill="#4a8cf0" /><path d="M8.200 10.500c2 1.500 4 1.500 7 0L13.500 16.500c-2 1.500-4 1.500-7 0z" fill="#fbd030" /></svg>
      <span class="text-[17px] font-bold italic font-['Liberation_Sans',sans-serif] [text-shadow:1px_1px_2px_#1c4a1c]">Inicio</span>
    </button>
    <nav class="flex gap-[2px] ml-[10px]">
      <button class="w-[158px] h-6 flex items-center gap-1 pl-2 rounded-sm bg-[#3c81f3] shadow-[inset_1px_1px_0_#5c9af8,inset_-1px_-1px_0_#2a62cf]">
        <svg class="size-4" viewBox="0 0 16 16"><circle cx="8" cy="8" r="7" fill="#e8641b" /><circle cx="9" cy="6.500" r="4.800" fill="#3d7fc8" /><path d="M1 5c1-2 2-3 3-4v3c3-1 4 1 3 3L5 8c1 3 5 3 7 1 2-3 1-5 0-7 5 4 4 12-3 13C3 15 0 11 1 5z" fill="#f08a22" /></svg>
        Portalnet.CL - Crear ...
      </button>
      <button class="w-[158px] h-6 flex items-center gap-1 pl-2 rounded-sm bg-[#3c81f3] shadow-[inset_1px_1px_0_#5c9af8,inset_-1px_-1px_0_#2a62cf]">
        <svg class="size-4" viewBox="0 0 16 16"><circle cx="5.500" cy="4.500" r="2.500" fill="#9be08a" /><circle cx="11" cy="4" r="2.500" fill="#9bd8f4" /><path d="M1 12c1-6 8-6 9 0z" fill="#6cc04a" /><path d="M7 10c2-5 8-3 8 2z" fill="#5fb4e0" /><path d="M0 9c5 5 10 2 16 4-5 3-13 2-16-4z" fill="#f2d57c" /></svg>
        Windows Live Messen...
      </button>
      <button class="w-[158px] h-6 flex items-center gap-1 pl-2 rounded-sm bg-[#3c81f3] shadow-[inset_1px_1px_0_#5c9af8,inset_-1px_-1px_0_#2a62cf]">
        <svg class="size-4" viewBox="0 0 16 16"><path d="M1.500 13V3.500L3 2h4l1.500 2H13v9z" fill="#e8b83a" stroke="#a87c14" /><path d="M1.500 13.500L4 6.500h11.500l-2 7z" fill="#fdeb8c" stroke="#b98d1e" /></svg>
        Resident Evil
      </button>
      <button class="w-[159px] h-6 flex items-center gap-1 pl-[10px] pt-px rounded-sm bg-[#1e52b7] shadow-[inset_1px_1px_2px_#0e2f80]">
        <svg class="size-[14px] mr-px"><use href="#ps" /></svg>
        Adobe Photoshop CS...
      </button>
    </nav>
    <div class="ml-auto w-[169px] h-[25px] flex items-center rounded-xs border border-[#666] bg-linear-to-b from-[#4a4e58] via-[#14161c] via-50% to-[#0c0d12]">
      <svg class="size-[14px] ml-1" viewBox="0 0 14 14"><circle cx="7" cy="7" r="7" fill="#e8eef8" /><path d="M7 0a7 7 0 0 1 7 7H7z" fill="#7cc46a" /><path d="M0 7a7 7 0 0 1 7-7v7z" fill="#f0a070" /><circle cx="7" cy="7" r="4.500" fill="#2f6fd0" /><path d="M5.500 4.500v5l4-2.500z" fill="#fff" /></svg>
      <div class="flex items-center ml-[6px] w-[130px] h-[19px] rounded-full border border-[#555a64]">
        <button aria-label="Detener" class="ml-[10px] size-[7px] bg-white"></button>
        <button aria-label="Anterior" class="w-[26px] h-[13px] ml-2 rounded-l grid place-items-center bg-[#4a4f5a]"><svg class="w-[10px] h-[7px]" viewBox="0 0 10 7"><path d="M1 0v7M9 0L3 3.500 9 7z" fill="#777d88" stroke="#777d88" /></svg></button>
        <button aria-label="Reproducir" class="-mx-[3px] z-10"><svg class="size-[22px]" viewBox="0 0 22 22"><circle cx="11" cy="11" r="10.300" fill="#1c50c8" stroke="#b9cdf2" stroke-width="1.400" /><path d="M2.500 9a9 9 0 0 1 17 0c-5 2-12 2-17 0z" fill="#7aa8f0" /><path d="M8 5.500v11l8-5.500z" fill="#fff" /></svg></button>
        <button aria-label="Siguiente" class="w-[26px] h-[13px] rounded-r grid place-items-center bg-[#4a4f5a]"><svg class="w-[10px] h-[7px] rotate-180" viewBox="0 0 10 7"><path d="M1 0v7M9 0L3 3.500 9 7z" fill="#777d88" stroke="#777d88" /></svg></button>
        <button aria-label="Volumen" class="flex items-center gap-[2px] ml-[6px]"><svg class="w-3 h-[9px]" viewBox="0 0 12 9"><path d="M0 3h2l3-3v9L2 6H0z" fill="#fff" /><path d="M7 2c1 2 1 3 0 5M9 1c2 3 2 4 0 7" fill="none" stroke="#ddd" /></svg><svg class="w-[7px] h-1"><use href="#caret" /></svg></button>
      </div>
      <div class="flex flex-col items-center gap-1 ml-1">
        <svg class="w-[6px] h-[7px]" viewBox="0 0 6 7"><path d="M.5 2.500L3 .5l2.500 2M.5 4.500l2.500 2 2.500-2" fill="none" stroke="#fff" /></svg>
        <svg class="w-[7px] h-[7px]" viewBox="0 0 7 7"><path d="M2.500 2V.5h4v4H5M.5 2.500h4v4h-4z" fill="none" stroke="#fff" /></svg>
      </div>
    </div>
    <div class="ml-[68px] w-[111px] h-full flex items-center pr-[13px] border-l border-[#0d3fa0] bg-[linear-gradient(to_bottom,#1270c8,#1cb0f5_8%,#0f8ce8_25%,#129af0_85%,#0d5db8)]">
      <button aria-label="Mostrar iconos" class="-ml-[10px]"><svg class="size-[18px]" viewBox="0 0 18 18"><circle cx="9" cy="9" r="8" fill="#2f8cf0" stroke="#8ecbf8" /><path d="M10.500 5l-4 4 4 4" fill="none" stroke="#fff" stroke-width="2" /></svg></button>
      <svg class="w-[14px] h-4 ml-[3px]" viewBox="0 0 14 16"><circle cx="5" cy="3" r="2.500" fill="#d8e4f0" /><path d="M0 14c0-10 9-10 9 0z" fill="#b8cbe0" /><rect x="7" y="8" width="7" height="7" rx="1" fill="#2cba2c" stroke="#0b6e0b" /><path d="M9 11.500h3" stroke="#fff" stroke-width="2" /></svg>
      <svg class="size-4 ml-[3px]" viewBox="0 0 16 16"><circle cx="8" cy="8" r="7.500" fill="#f07c1c" stroke="#c45508" /><circle cx="7.500" cy="8" r="3.300" fill="none" stroke="#fff" stroke-width="2" /><path d="M11 4v8" stroke="#fff" stroke-width="2" /></svg>
      <svg class="size-4 ml-[2px]" viewBox="0 0 16 16"><rect width="16" height="16" fill="#00006a" /><circle cx="8" cy="8" r="1.500" fill="#ffef3c" /><path d="M5.500 5c-2 2-2 4 0 6M10.500 5c2 2 2 4 0 6M3.500 3c-3 3-3 7 0 10M12.500 3c3 3 3 7 0 10" fill="none" stroke="#ffef3c" stroke-width="1.200" /></svg>
      <time class="ml-auto">19:18</time>
    </div>
  </footer>

</body>
</html>
